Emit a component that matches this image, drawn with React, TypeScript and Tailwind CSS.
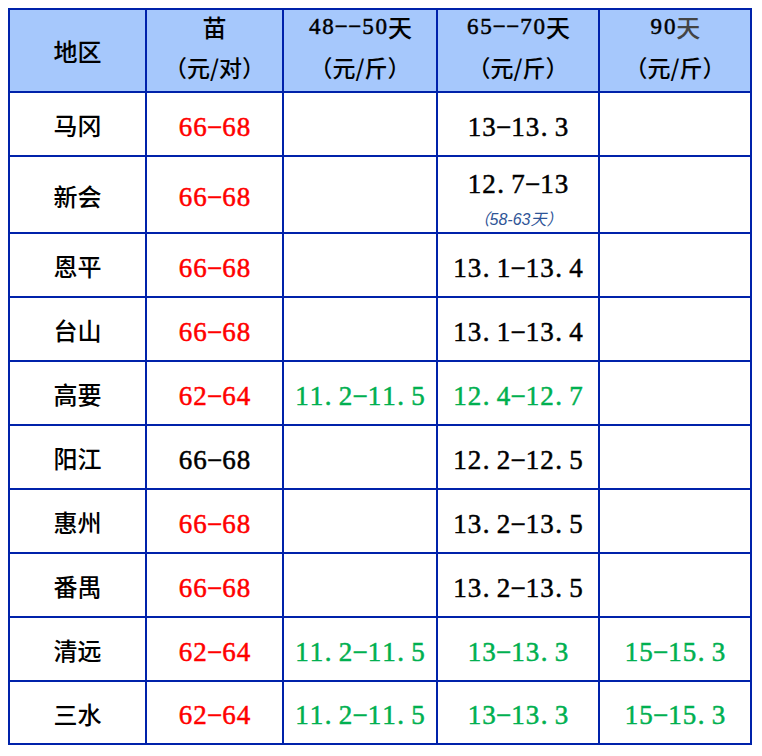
import React from 'react';

type Tone = 'red' | 'green' | 'black';

type Cell = { text: string; tone?: Tone; note?: string } | null;

const toneClass: Record<Tone, string> = {
  red: 'text-[#ff0000]',
  green: 'text-[#00b050]',
  black: 'text-black',
};

const rows: { area: string; cells: Cell[] }[] = [
  { area: '马冈', cells: [{ text: '66-68', tone: 'red' }, null, { text: '13-13.3' }, null] },
  { area: '新会', cells: [{ text: '66-68', tone: 'red' }, null, { text: '12.7-13', note: '（58-63天）' }, null] },
  { area: '恩平', cells: [{ text: '66-68', tone: 'red' }, null, { text: '13.1-13.4' }, null] },
  { area: '台山', cells: [{ text: '66-68', tone: 'red' }, null, { text: '13.1-13.4' }, null] },
  {
    area: '高要',
    cells: [
      { text: '62-64', tone: 'red' },
      { text: '11.2-11.5', tone: 'green' },
      { text: '12.4-12.7', tone: 'green' },
      null,
    ],
  },
  { area: '阳江', cells: [{ text: '66-68' }, null, { text: '12.2-12.5' }, null] },
  { area: '惠州', cells: [{ text: '66-68', tone: 'red' }, null, { text: '13.2-13.5' }, null] },
  { area: '番禺', cells: [{ text: '66-68', tone: 'red' }, null, { text: '13.2-13.5' }, null] },
  {
    area: '清远',
    cells: [
      { text: '62-64', tone: 'red' },
      { text: '11.2-11.5', tone: 'green' },
      { text: '13-13.3', tone: 'green' },
      { text: '15-15.3', tone: 'green' },
    ],
  },
  {
    area: '三水',
    cells: [
      { text: '62-64', tone: 'red' },
      { text: '11.2-11.5', tone: 'green' },
      { text: '13-13.3', tone: 'green' },
      { text: '15-15.3', tone: 'green' },
    ],
  },
];

const cjk = "font-['Noto_Sans_CJK_SC',sans-serif] font-medium";
const num = "font-['Liberation_Serif','Noto_Sans_CJK_SC',serif] [-webkit-text-stroke:0.5px_currentColor]";

// fixed pitch digits, like the song-style font of the sheet
const Mono = ({ text, small }: { text: string; small?: boolean }) => (
  <span className="inline-flex">
    {text.split('').map((ch, i) => (
      <span
        key={i}
        className={
          (small ? 'w-[13.3px] ' : 'w-[14.5px] ') +
          (ch === '.' ? 'justify-start pl-[1px]' : 'justify-center') +
          ' flex whitespace-nowrap'
        }
      >
        {ch === '-' ? '−' : ch}
      </span>
    ))}
  </span>
);

const HeadCell = ({ top, bottom, grayDay }: { top: string; bottom: string; grayDay?: boolean }) => (
  <div className="bg-[#a6c8fc] flex flex-col items-center justify-center leading-[40px] text-black">
    <div className="-translate-y-[4px] flex flex-col items-center">
      <div className="flex items-center">
        <span className={`${num} text-[23px]`}>
          <Mono text={top} small />
        </span>
        <span className={`${cjk} text-[24px] ${grayDay ? 'text-[#444]' : ''}`}>天</span>
      </div>
      <div className={`${cjk} text-[23px]`}>{bottom}</div>
    </div>
  </div>
);

export default function App() {
  return (
    <div className="bg-white w-[762px] h-[756px] pt-[8px] pl-[8px]">
      <div className="w-[744px] bg-[#0022aa] p-[2px] grid grid-cols-[135px_135px_152px_160px_150px] grid-rows-[81px_62px_75px_62px_62px_62px_62px_62px_62px_62px_61px] gap-[2px]">
        {/* header */}
        <div className={`bg-[#a6c8fc] flex items-center justify-center ${cjk} text-[24px] text-black`}>地区</div>
        <div className="bg-[#a6c8fc] flex flex-col items-center justify-center leading-[40px] text-black">
          <div className="-translate-y-[4px] flex flex-col items-center">
            <div className={`${cjk} text-[24px]`}>苗</div>
            <div className={`${cjk} text-[23px]`}>（元/对）</div>
          </div>
        </div>
        <HeadCell top="48--50" bottom="（元/斤）" />
        <HeadCell top="65--70" bottom="（元/斤）" />
        <HeadCell top="90" bottom="（元/斤）" grayDay />

        {rows.map((row) => (
          <React.Fragment key={row.area}>
            <div className={`bg-white flex items-center justify-center pt-[2px] ${cjk} text-[24px] text-black`}>
              {row.area}
            </div>
            {row.cells.map((c, i) => (
              <div
                key={i}
                className={`bg-white flex flex-col items-center justify-center ${c?.note ? '' : 'pt-[5px]'}`}
              >
                {c && (
                  <>
                    <div className={`${num} text-[27px] leading-[30px] ${toneClass[c.tone ?? 'black']}`}>
                      <Mono text={c.text} />
                    </div>
                    {c.note && (
                      <div className="font-['Liberation_Sans','Noto_Sans_CJK_SC',sans-serif] italic text-[16px] leading-[18px] mt-[12px] mb-[-9px] text-[#2f5597]">
                        {c.note}
                      </div>
                    )}
                  </>
                )}
              </div>
            ))}
          </React.Fragment>
        ))}
      </div>
    </div>
  );
}
